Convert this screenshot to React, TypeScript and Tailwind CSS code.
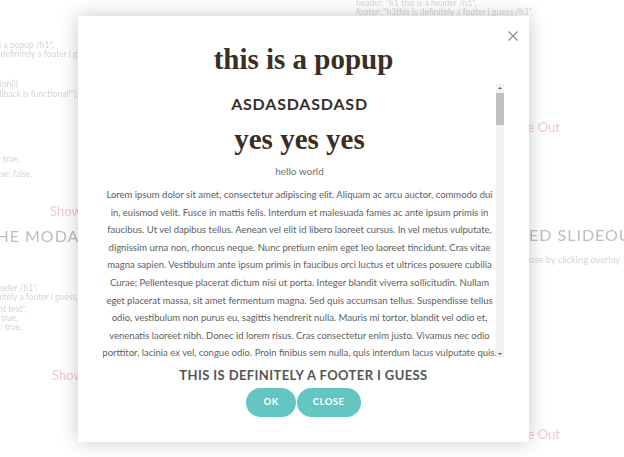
import React from "react";

const loremLines = [
  "Lorem ipsum dolor sit amet, consectetur adipiscing elit. Aliquam ac arcu auctor, commodo dui",
  "in, euismod velit. Fusce in mattis felis. Interdum et malesuada fames ac ante ipsum primis in",
  "faucibus. Ut vel dapibus tellus. Aenean vel elit id libero laoreet cursus. In vel metus vulputate,",
  "dignissim urna non, rhoncus neque. Nunc pretium enim eget leo laoreet tincidunt. Cras vitae",
  "magna sapien. Vestibulum ante ipsum primis in faucibus orci luctus et ultrices posuere cubilia",
  "Curae; Pellentesque placerat dictum nisi ut porta. Integer blandit viverra sollicitudin. Nullam",
  "eget placerat massa, sit amet fermentum magna. Sed quis accumsan tellus. Suspendisse tellus",
  "odio, vestibulum non purus eu, sagittis hendrerit nulla. Mauris mi tortor, blandit vel odio et,",
  "venenatis laoreet nibh. Donec id lorem risus. Cras consectetur enim justo. Vivamus nec odio",
  "porttitor, lacinia ex vel, congue odio. Proin finibus sem nulla, quis interdum lacus vulputate quis.",
];

function BackgroundPage() {
  return (
    <div className="flex h-full select-none blur-[0.6px] font-['Lato',sans-serif]">
      {/* left column */}
      <div className="-ml-[52px] w-[320px] shrink-0 text-[#cbcbcb]">
        <div className="-ml-[11px] pt-[41px] text-[8.5px] leading-[9px] whitespace-pre">
          <div>{'header: "h1this is a popup /h1",'}</div>
          <div>{'footer: "h3this is definitely a footer i guess /h3",'}</div>
        </div>
        <div className="mt-[20px] -ml-[2px] text-[8.5px] leading-[10px] whitespace-pre">
          <div>{"callback: function(){"}</div>
          <div className="pl-[23px]">{'alert("callback is functional!");'}</div>
        </div>
        <div className="mt-[57px] -ml-[9px] text-[8.5px] leading-[7.5px] whitespace-pre">
          <div>{"closeOnOverlay: true,"}</div>
          <div>{"speed: 1,"}</div>
          <div>{"showOverlayClose: false,"}</div>
        </div>
        <div className="mt-[25px] ml-[102px] text-[13px] leading-[15px] text-[#f2b9c5]">Show Modal</div>
        <div className="mt-[7px] ml-[38px] text-[16px] leading-[20px] tracking-[1px] text-[#b3aca8] whitespace-nowrap">
          THE MODAL POPUP
        </div>
        <div className="mt-[38px] -ml-[29px] text-[8.5px] leading-[9px] whitespace-pre">
          <div>{'header: "h1this is a header /h1",'}</div>
          <div>{'footer: "h3this is definitely a footer i guess,'}</div>
          <div className="mt-[3px]">{'content: "some content text",'}</div>
          <div>{"closeOnOverlayClick: true,"}</div>
          <div>{"showCloseButtonIcon: true,"}</div>
        </div>
        <div className="mt-[36px] ml-[104px] text-[13px] leading-[15px] text-[#f2b9c5]">Show Modal</div>
      </div>
      {/* right column */}
      <div className="ml-[77px] w-[400px] shrink-0 text-[#cbcbcb]">
        <div className="-mt-[10px] text-[8.5px] leading-[9px] whitespace-pre">
          <div>{"var options = {"}</div>
          <div className="pl-[11px]">{'header: "h1 this is a header /h1",'}</div>
          <div className="pl-[11px]">{'footer: "h3this is definitely a footer i guess /h3",'}</div>
        </div>
        <div className="mt-[103px] w-[215px] text-right text-[13px] leading-[15px] text-[#f2b9c5]">Show Slide Out</div>
        <div className="mt-[90px] ml-[78px] text-[16px] leading-[20px] tracking-[1px] text-[#b3aca8] whitespace-nowrap">
          THE ANIMATED SLIDEOUT
        </div>
        <div className="mt-[9px] w-[275px] text-right text-[9.3px] leading-[11px]">Close by clicking overlay</div>
        <div className="mt-[162px] w-[215px] text-right text-[13px] leading-[15px] text-[#f2b9c5]">Show Slide Out</div>
      </div>
    </div>
  );
}

function ScrollTrack() {
  return (
    <div className="flex w-[8px] shrink-0 flex-col bg-[#f1f1f1]">
      <svg viewBox="0 0 8 8" className="h-[8px] w-[8px]">
        <path d="M2 5 L4 3 L6 5 Z" fill="#606060" />
      </svg>
      <div className="flex-1 pt-px">
        <div className="h-[32px] bg-[#c1c1c1]" />
      </div>
      <svg viewBox="0 0 8 8" className="h-[8px] w-[8px]">
        <path d="M2 3 L4 5 L6 3 Z" fill="#606060" />
      </svg>
    </div>
  );
}

function Popup() {
  return (
    <div className="relative flex h-[426px] w-[451px] flex-col bg-white px-[25px] pt-[25px] pb-[25px] shadow-[0_0_18px_rgba(0,0,0,0.22)]">
      <button type="button" aria-label="Close" className="absolute top-[15px] right-[11px] h-[10px] w-[10px] text-[#8a8a8a]">
        <svg viewBox="0 0 10 10" className="h-[10px] w-[10px]" fill="none" stroke="currentColor" strokeWidth="1.1">
          <path d="M0.5 0.5 L9.5 9.5 M9.5 0.5 L0.5 9.5" />
        </svg>
      </button>

      <h1 className="text-center font-['Liberation_Serif',serif] text-[29px] leading-[36px] font-bold text-[#3b2e25]">
        this is a popup
      </h1>

      <div className="mt-[7px] flex h-[274px]">
        <div className="flex-1 overflow-hidden">
          <div className="flex flex-col items-center pt-[10px] text-center font-['Lato',sans-serif]">
            <h2 className="text-[16px] leading-[20px] font-bold tracking-[0.8px] text-[#3b2e25]">ASDASDASDASD</h2>
            <h2 className="mt-[7px] font-['Liberation_Serif',serif] text-[29px] leading-[36px] font-bold text-[#3b2e25]">
              yes yes yes
            </h2>
            <p className="mt-[7px] text-[10px] leading-[14px] text-[#6f6f6f]">hello world</p>
            <div className="mt-[8px] text-[9.5px] leading-[17.6px] whitespace-nowrap text-[#5e5e5e]">
              {Array.from({ length: 12 }).map((_, i) => (
                <p key={i}>
                  {loremLines.map((line) => (
                    <span key={line} className="block">
                      {line}
                    </span>
                  ))}
                </p>
              ))}
            </div>
          </div>
        </div>
        <ScrollTrack />
      </div>

      <h3 className="mt-[9px] text-center font-['Lato',sans-serif] text-[13px] leading-[16px] font-bold tracking-[0.4px] text-[#555555]">
        THIS IS DEFINITELY A FOOTER I GUESS
      </h3>

      <div className="mt-[5px] flex justify-center gap-px font-['Lato',sans-serif]">
        <button type="button" className="h-[29px] rounded-full bg-[#63c6c3] px-[17px] text-[9.5px] font-bold tracking-[0.5px] text-white">
          OK
        </button>
        <button type="button" className="h-[29px] rounded-full bg-[#63c6c3] px-[16px] text-[9.5px] font-bold tracking-[0.5px] text-white">
          CLOSE
        </button>
      </div>
    </div>
  );
}

export default function App() {
  return (
    <div className="relative h-[457px] w-[624px] overflow-hidden bg-white">
      <BackgroundPage />
      <div className="absolute inset-0 bg-white/20">
        <div className="pt-[16px] pl-[78px]">
          <Popup />
        </div>
      </div>
    </div>
  );
}
